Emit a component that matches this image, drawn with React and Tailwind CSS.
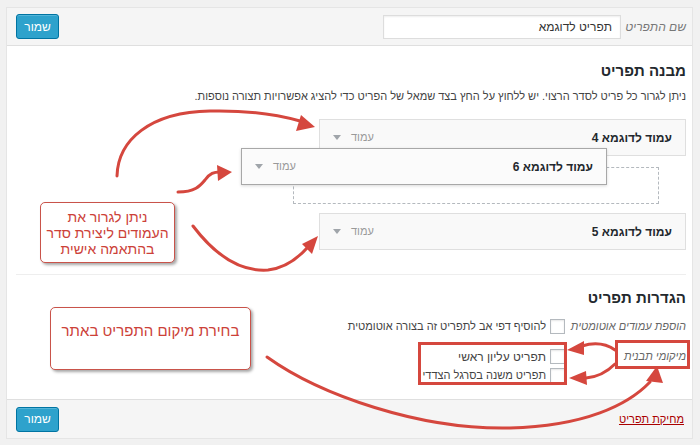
import React from 'react'

const RED = '#d5473e'

function Caret() {
  return (
    <svg width="8" height="5" viewBox="0 0 8 5">
      <path d="M0 0h8L4 5z" fill="#a0a5aa" />
    </svg>
  )
}

function MenuItem({ title, className = '' }) {
  return (
    <div className={`flex items-center justify-between h-[37px] pr-[13px] pl-[13px] border ${className}`}>
      <span className="text-[12px] font-bold text-[#23282d]">{title}</span>
      <span className="flex items-center gap-[10px] text-[11px] text-[#999]">
        עמוד
        <Caret />
      </span>
    </div>
  )
}

function Checkbox() {
  return <span className="inline-block shrink-0 w-[15px] h-[15px] border border-[#b4b9be] bg-white shadow-[inset_0_1px_2px_rgba(0,0,0,0.1)]" />
}

function SaveButton() {
  return (
    <button className="w-[43px] h-[25px] rounded-[3px] bg-[#2ea2cc] border border-[#0074a2] text-white text-[12px] leading-none shadow-[inset_0_1px_0_rgba(120,200,230,0.5)]">
      שמור
    </button>
  )
}

export default function App() {
  return (
    <div className="relative w-[700px] h-[445px] bg-[#f1f1f1] pt-[7px] pl-[6px] overflow-hidden font-['Liberation_Sans',Arial,sans-serif]">
      <div dir="rtl" className="w-[687px] border border-[#e5e5e5] bg-white">
        {/* header */}
        <div className="h-[38px] flex items-center justify-between bg-[#f5f5f5] border-b border-[#dfdfdf] pr-[6px] pl-[9px]">
          <div className="flex items-center gap-[6px]">
            <span className="w-[59px] text-[12px] italic text-[#777] whitespace-nowrap">שם התפריט</span>
            <div className="w-[238px] h-[24px] flex items-center border border-[#ddd] bg-white px-[8px] text-[12px] text-[#333] shadow-[inset_0_1px_2px_rgba(0,0,0,0.07)]">
              תפריט לדוגמא
            </div>
          </div>
          <SaveButton />
        </div>

        {/* body */}
        <div className="h-[353px] pr-[6px] pl-[9px] pt-[15px]">
          <h3 className="text-[15px] font-bold leading-[20px] text-[#23282d]">מבנה תפריט</h3>
          <p className="mt-[6px] text-[11px] leading-[18px] text-[#444]">
            ניתן לגרור כל פריט לסדר הרצוי. יש ללחוץ על החץ בצד שמאל של הפריט כדי להציג אפשרויות תצורה נוספות.
          </p>
          <div className="mt-[14px] flex flex-col items-start">
            <MenuItem title="עמוד לדוגמא 4" className="w-[367px] border-[#dfdfdf] bg-[#f9f9f9]" />
            <div className="mt-[11px] mr-[27px] w-[366px] h-[37px] border border-dashed border-[#b4b9be]" />
            <MenuItem title="עמוד לדוגמא 5" className="mt-[9px] w-[367px] border-[#dfdfdf] bg-[#f9f9f9]" />
          </div>

          <div className="mt-[24px] border-t border-[#eeeeee] pt-[13px]">
            <h3 className="text-[15px] font-bold leading-[20px] text-[#23282d]">הגדרות תפריט</h3>
            <div className="mt-[9px] flex items-center h-[18px]">
              <span className="w-[121px] text-[11px] italic text-[#666] whitespace-nowrap">הוספת עמודים אוטומטית</span>
              <Checkbox />
              <span className="mr-[4px] text-[11px] text-[#444] whitespace-nowrap">להוסיף דפי אב לתפריט זה בצורה אוטומטית</span>
            </div>
            <div className="mt-[12px] flex">
              <span className="w-[121px] h-[19px] leading-[19px] text-[11px] italic text-[#666] whitespace-nowrap">מיקומי תבנית</span>
              <div className="flex flex-col">
                <div className="flex items-center h-[19px]">
                  <Checkbox />
                  <span className="mr-[4px] text-[12px] text-[#444] whitespace-nowrap">תפריט עליון ראשי</span>
                </div>
                <div className="flex items-center h-[19px]">
                  <Checkbox />
                  <span className="mr-[4px] text-[11px] text-[#444] whitespace-nowrap">תפריט משנה בסרגל הצדדי</span>
                </div>
              </div>
            </div>
          </div>
        </div>

        {/* footer */}
        <div className="h-[39px] flex items-center justify-between bg-[#f5f5f5] border-t border-[#dfdfdf] pr-[8px] pl-[9px]">
          <a className="text-[11px] text-[#a00] underline">מחיקת תפריט</a>
          <SaveButton />
        </div>
      </div>

      {/* dragged item */}
      <div dir="rtl" className="absolute left-[241px] top-[148px] w-[366px]">
        <MenuItem title="עמוד לדוגמא 6" className="h-[36px] border-[#a8a8a8] bg-[#fbfbfb] shadow-[0_1px_3px_rgba(0,0,0,0.15)]" />
      </div>

      {/* annotations */}
      <svg className="absolute inset-0 pointer-events-none" width="700" height="445" viewBox="0 0 700 445">
        <g fill="none" stroke={RED} strokeWidth="3" strokeLinecap="round">
          <path d="M117,176 C118,140 150,112 210,111 C250,110 278,115 300,121" />
          <path d="M178,192 C195,192 200,186 205,180 C210,173 214,172 220,172" />
          <path d="M193,226 C215,255 240,272 268,270 C285,268 298,258 307,248" />
          <path d="M267,357 C320,395 420,430 510,428 C585,426 628,405 650,382" />
          <path d="M615,350 C605,343 595,342 582,346" />
          <path d="M615,364 C607,372 598,377 586,378" />
          <rect x="419.5" y="343.5" width="146" height="40" />
          <rect x="616.5" y="341.5" width="72" height="26" />
        </g>
        <g fill={RED}>
          <polygon points="315,127 296,131 301,115" />
          <polygon points="232,172 217,165 218,181" />
          <polygon points="318,236 302,244 312,254" />
          <polygon points="657,366 646,381 663,383" />
          <polygon points="567,350 584,341 584,355" />
          <polygon points="569,378 586,371 587,385" />
        </g>
      </svg>

      <div dir="rtl" className="absolute left-[40px] top-[202px] w-[135px] h-[61px] flex items-center justify-center bg-white border-[1.5px] border-[#c9534a] rounded-[5px] shadow-[2px_2px_3px_rgba(0,0,0,0.35)] text-center text-[14px] leading-[16px] text-[#cc4138]">
        ניתן לגרור את<br />העמודים ליצירת סדר<br />בהתאמה אישית
      </div>
      <div dir="rtl" className="absolute left-[50px] top-[307px] w-[201px] h-[63px] pt-[12px] bg-white border-[1.5px] border-[#c9534a] rounded-[5px] shadow-[2px_2px_3px_rgba(0,0,0,0.35)] text-center text-[15px] leading-[22px] text-[#cc4138] whitespace-nowrap">
        בחירת מיקום התפריט באתר
      </div>
    </div>
  )
}
